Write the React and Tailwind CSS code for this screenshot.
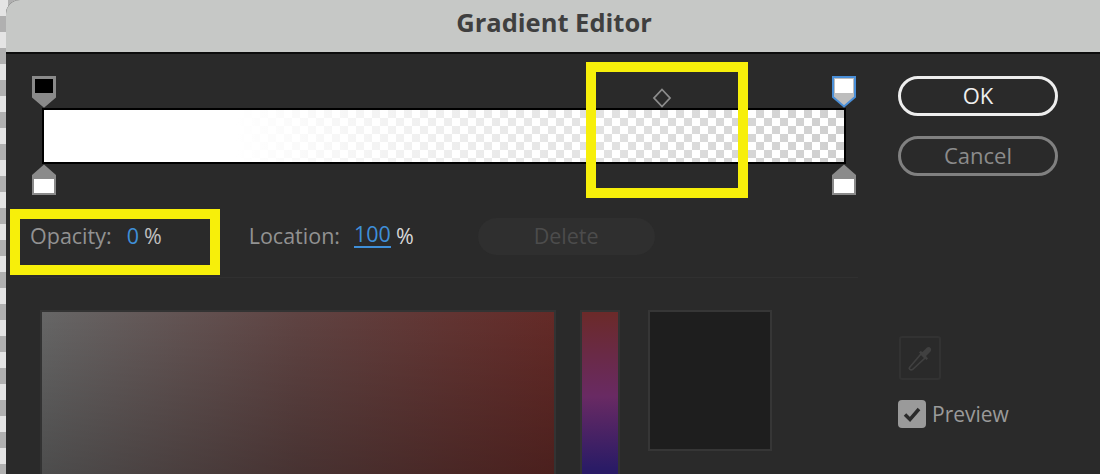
const font = { fontFamily: '"Open Sans", "Noto Sans", sans-serif' };

function StopShape({ up, fill, stroke, inner }) {
  // opacity/colour stop marker: little house shape, tip points at the bar
  return (
    <svg width="24" height="32" viewBox="0 0 24 32" className="block">
      {up ? (
        <>
          <path d="M12 0.5 L24 11 V31 H0 V11 Z" fill={fill} />
          <rect x="2" y="15" width="20" height="14" fill={inner} />
        </>
      ) : (
        <>
          <path d="M1 1 H23 V21 L12 30.5 L1 21 Z" fill={fill} stroke={stroke || fill} strokeWidth="2" />
          <rect x="3" y="3" width="18" height="14" fill={inner} />
        </>
      )}
    </svg>
  );
}

function GradientBar() {
  return (
    <div className="relative ml-[36px] mt-[54px] h-[56px] w-[804px]">
      <div className="h-full w-full border-2 border-black bg-[repeating-conic-gradient(#cfcfcf_0%_25%,#ffffff_0%_50%)] bg-size-[16px_16px]">
        <div className="h-full w-full bg-linear-to-r from-white from-24% to-white/0 to-100%" />
      </div>
      <div className="absolute left-[-10px] top-[-32px]">
        <StopShape fill="#8a8a8a" inner="#000000" />
      </div>
      <div className="absolute left-[790px] top-[-32px]">
        <StopShape fill="#bdbdbd" stroke="#4a8fd8" inner="#ffffff" />
      </div>
      <div className="absolute left-[-10px] top-[56px]">
        <StopShape up fill="#8a8a8a" inner="#ffffff" />
      </div>
      <div className="absolute left-[790px] top-[56px]">
        <StopShape up fill="#8a8a8a" inner="#ffffff" />
      </div>
      <svg width="20" height="20" viewBox="0 0 20 20" className="absolute left-[610px] top-[-20px]">
        <path d="M10 1.5 L18 10 L10 18.5 L2 10 Z" fill="none" stroke="#8c8c8c" strokeWidth="1.8" />
      </svg>
    </div>
  );
}

function StopFields() {
  return (
    <div className="ml-[24px] mt-[54px] flex h-[37px] items-center pb-[2px] text-[21.5px] leading-none">
      <span className="text-[#929292]">Opacity:</span>
      <span className="ml-[15px] text-[#3f8fd9]">0</span>
      <span className="ml-[5px] text-[#c0c0c0]">%</span>
      <span className="ml-[87px] text-[#929292]">Location:</span>
      <span className="ml-[14px] border-b-2 border-[#3f8fd9] pb-[1px] text-[#3f8fd9]">100</span>
      <span className="ml-[5px] text-[#d8d8d8]">%</span>
      <button className="ml-[64px] mt-[2px] h-[37px] w-[177px] rounded-full bg-[#2f2f2f] pb-[1px] text-[21.5px] text-[#4c4c4c]">
        Delete
      </button>
    </div>
  );
}

function ColorPickers() {
  return (
    <div className="ml-[34px] mt-[32px] flex h-[200px] items-start">
      <div className="h-full w-[516px] border-2 border-[#333333] bg-[linear-gradient(180deg,rgba(0,0,0,0),rgba(0,0,0,0.3)),linear-gradient(90deg,#666666,#5f4342_50%,#642a27)]" />
      <div className="ml-[24px] h-full w-[40px] border-2 border-[#333333] bg-[linear-gradient(180deg,#6b2a29_0%,#692a63_43%,#2a1b66_80%)]" />
      <div className="ml-[28px] h-[141px] w-[124px] border-2 border-[#363636] bg-[#1e1e1e]" />
    </div>
  );
}

function SideColumn() {
  return (
    <div className="ml-[40px] flex w-[160px] flex-col">
      <button className="mt-[22px] h-[40px] w-[160px] rounded-full border-[3px] border-[#eeeeee] pb-[2px] text-[22px] leading-none text-[#eeeeee]">
        OK
      </button>
      <button className="mt-[20px] h-[40px] w-[160px] rounded-full border-[3px] border-[#808080] pb-[2px] text-[22px] leading-none text-[#8c8c8c]">
        Cancel
      </button>
      <div className="ml-[1px] mt-[160px] flex h-[44px] w-[42px] items-center justify-center rounded-[3px] border-2 border-[#323232]">
        <svg width="30" height="30" viewBox="0 0 30 30" fill="none">
          <path d="M4.5 24.5 L16 11 L20 15 L7.5 26.5 C5.5 27.5 3.5 26 4.5 24.5 Z" stroke="#404040" strokeWidth="1.6" />
          <path d="M14 9.5 L21.5 17 L23 15.5 L21 13 L25.5 8.5 C27.5 6 24.5 2.5 22 4.5 L17.5 9 L15.5 8 Z" fill="#404040" />
        </svg>
      </div>
      <div className="mt-[20px] flex items-center">
        <div className="flex h-[28px] w-[28px] items-center justify-center rounded-[4px] bg-[#9a9a9a]">
          <svg width="20" height="20" viewBox="0 0 20 20" fill="none">
            <path d="M3 10.5 L8 15.5 L17 5" stroke="#2a2a2a" strokeWidth="3.5" />
          </svg>
        </div>
        <span className="ml-[6px] text-[21px] leading-none text-[#9a9a9a]">Preview</span>
      </div>
    </div>
  );
}

export default function App() {
  return (
    <div
      style={font}
      className="relative flex h-[474px] w-[1100px] overflow-hidden bg-[repeating-conic-gradient(#b0b0b0_0%_25%,#e4e4e4_0%_50%)] bg-size-[16px_32px]"
    >
      <div className="ml-[6px] flex flex-1 flex-col overflow-hidden rounded-tl-[14px] bg-[#2a2a2a]">
        <div className="flex h-[54px] shrink-0 items-center justify-center border-b-2 border-[#0c0c0c] bg-[#c6c8c6] pl-[2px] pb-[8px] text-[25.5px] font-bold text-[#3f3f3f]">
          Gradient Editor
        </div>
        <div className="flex flex-1">
          <div className="w-[852px]">
            <GradientBar />
            <StopFields />
            <div className="ml-[24px] mt-[22px] h-[1px] bg-[#303030]" />
            <ColorPickers />
          </div>
          <SideColumn />
        </div>
      </div>

      {/* yellow callouts drawn over the screenshot */}
      <div className="absolute left-[586px] top-[62px] h-[136px] w-[162px] border-[10px] border-[#f7ef0a]" />
      <div className="absolute left-[10px] top-[209px] h-[66px] w-[210px] border-[10px] border-[#f7ef0a]" />
    </div>
  );
}
